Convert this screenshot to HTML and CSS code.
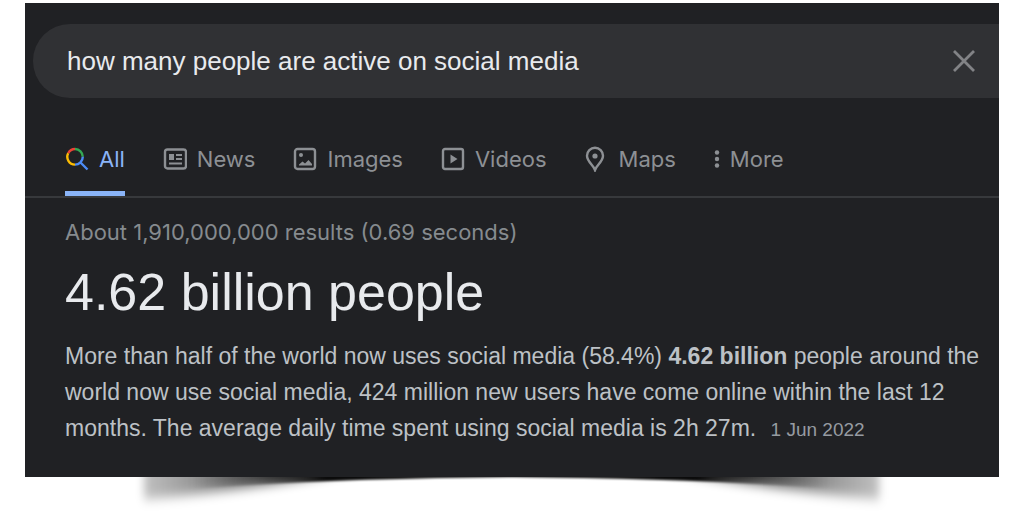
FILE: index.html
```
<!DOCTYPE html>
<html lang="en">
<head>
	<meta charset="UTF-8">
	<meta name="viewport" content="width=device-width, initial-scale=1">
	<title>how many people are active on social media</title>
	<link rel="stylesheet" href="styles.css">
</head>
<body>
	<div class="card">
		<form class="search">
			<input type="text" class="search-input" name="q" aria-label="Search" value="how many people are active on social media">
			<button type="reset" class="search-clear" aria-label="Clear">
				<svg width="24" height="24" viewBox="0 0 24 24"><path d="M2 2L22 22M22 2L2 22" fill="none" stroke="#828386" stroke-width="2.8"/></svg>
			</button>
		</form>

		<nav class="tabs">
			<a href="#" class="tab active">
				<svg width="24" height="24" viewBox="0 0 24 24" fill="none" stroke-width="2.4">
					<path d="M3.2 6.2A7.8 7.8 0 0 1 10 2" stroke="#ea4335"/>
					<path d="M10 2A7.8 7.8 0 0 1 17.8 9.8" stroke="#34a853"/>
					<path d="M17.8 9.8A7.8 7.8 0 0 1 10 17.6M15.5 15.5L22.5 22.5" stroke="#4c8bf5"/>
					<path d="M10 17.6A7.8 7.8 0 0 1 3.2 6.2" stroke="#fbbc04"/>
				</svg>
				<span>All</span>
			</a>
			<a href="#" class="tab">
				<svg width="24" height="24" viewBox="0 0 24 24" fill="none" stroke="currentColor" stroke-width="2.4">
					<rect x="2" y="2.5" width="21" height="19" rx="2.5"/>
					<path d="M13 8h6M13 12h6M6 16.5h13" stroke-width="2"/>
					<rect x="6" y="7" width="5" height="6" fill="currentColor" stroke="none"/>
				</svg>
				<span>News</span>
			</a>
			<a href="#" class="tab">
				<svg width="24" height="24" viewBox="0 0 24 24" fill="none" stroke="currentColor" stroke-width="2.4">
					<rect x="2" y="2" width="20" height="20" rx="2.5"/>
					<circle cx="8" cy="8" r="2" fill="currentColor" stroke="none"/>
					<path d="M6 18.5v-1l3.5-3 2.5 2 3.5-3.5 3.5 4v1.500z" fill="currentColor" stroke="none"/>
				</svg>
				<span>Images</span>
			</a>
			<a href="#" class="tab">
				<svg width="24" height="24" viewBox="0 0 24 24" fill="none" stroke="currentColor" stroke-width="2.4">
					<rect x="2" y="2" width="20" height="20" rx="2"/>
					<path d="M9.5 7.5v9l7-4.500z" fill="currentColor" stroke="none"/>
				</svg>
				<span>Videos</span>
			</a>
			<a href="#" class="tab">
				<svg width="24" height="26" viewBox="0 0 24 26" fill="none" stroke="currentColor" stroke-width="2.4">
					<path d="M10 24C8.5 19.5 2 15.5 2 9.8A8 8 0 0 1 18 9.8C18 15.5 11.5 19.5 10 24z"/>
					<circle cx="10" cy="10" r="2.6" fill="currentColor" stroke="none"/>
				</svg>
				<span>Maps</span>
			</a>
			<a href="#" class="tab">
				<svg width="6" height="20" viewBox="0 0 6 20" fill="currentColor">
					<circle cx="3" cy="3.5" r="2.2"/>
					<circle cx="3" cy="10" r="2.2"/>
					<circle cx="3" cy="16.5" r="2.2"/>
				</svg>
				<span>More</span>
			</a>
		</nav>

		<main class="result">
			<p class="stats">About 1,910,000,000 results (0.69 seconds)</p>
			<h1 class="answer">4.62 billion people</h1>
			<p class="snippet">More than half of the world now uses social media (58.4%) <b>4.62 billion</b> people around the world now use social media, 424 million new users have come online within the last 12 months. The average daily time spent using social media is 2h 27m. <span class="date">1 Jun 2022</span></p>
		</main>
	</div>

	<!-- curved shadow under the card -->
	<svg class="shadow" viewBox="0 0 780 36" preserveAspectRatio="none" aria-hidden="true">
		<defs>
			<linearGradient id="wide" gradientUnits="userSpaceOnUse" x1="0" y1="0" x2="780" y2="0">
				<stop offset="0.03" stop-opacity="0.25"/>
				<stop offset="0.13" stop-opacity="0.5"/>
				<stop offset="0.24" stop-opacity="0.8"/>
				<stop offset="0.76" stop-opacity="0.8"/>
				<stop offset="0.87" stop-opacity="0.5"/>
				<stop offset="0.97" stop-opacity="0.25"/>
			</linearGradient>
			<linearGradient id="thin" gradientUnits="userSpaceOnUse" x1="0" y1="0" x2="780" y2="0">
				<stop offset="0.09" stop-opacity="0"/>
				<stop offset="0.17" stop-opacity="0.3"/>
				<stop offset="0.26" stop-opacity="0.95"/>
				<stop offset="0.74" stop-opacity="0.95"/>
				<stop offset="0.83" stop-opacity="0.3"/>
				<stop offset="0.91" stop-opacity="0"/>
			</linearGradient>
			<filter id="soft" filterUnits="userSpaceOnUse" x="-20" y="-50" width="820" height="120"><feGaussianBlur stdDeviation="4 6"/></filter>
			<filter id="sharp" filterUnits="userSpaceOnUse" x="-20" y="-50" width="820" height="120"><feGaussianBlur stdDeviation="4 1"/></filter>
		</defs>
		<path d="M22 -30V23Q120 14 230 -8L390 -24L550 -8Q660 14 758 23V-30z" fill="url(#wide)" filter="url(#soft)"/>
		<path d="M60 -20V13Q190 2 390 0Q590 2 720 13V-20z" fill="url(#thin)" filter="url(#sharp)"/>
	</svg>
</body>
</html>
```
FILE: styles.css
```
* {
	box-sizing: border-box;
}
body {
	margin: 0;
	padding: 3px 25px 0;
	background-color: #fff;
	font-family: "Liberation Sans", Arial, sans-serif;
}
p, h1 {
	margin: 0;
}
.card {
	background-color: #202124;
	padding: 21px 0 29px;
}
.search {
	display: flex;
	align-items: center;
	height: 74px;
	margin-left: 8px;
	padding: 0 23px 0 34px;
	border-radius: 37px 0 0 37px;
	background-color: #303134;
}
.search-input {
	flex: 1;
	min-width: 0;
	padding: 0;
	border: 0;
	outline: 0;
	background: none;
	color: #e8eaed;
	font-family: inherit;
	font-size: 26px;
}
.search-clear {
	display: flex;
	padding: 0;
	border: 0;
	background: none;
	cursor: pointer;
}
.tabs {
	display: flex;
	gap: 38px;
	margin-top: 36px;
	padding-left: 40px;
	border-bottom: 2px solid #37393c;
}
.tab {
	display: flex;
	align-items: center;
	gap: 10px;
	height: 62px;
	padding-bottom: 12px;
	color: #8d9094;
	font-family: Inter, sans-serif;
	font-size: 22px;
	text-decoration: none;
}
.tab svg {
	flex: none;
}
.tab.active {
	border-bottom: 5px solid #8ab4f8;
	padding-bottom: 7px;
	color: #8ab4f8;
}
.result {
	padding: 20px 12px 0 40px;
}
.stats {
	color: #868b8f;
	font-family: Inter, sans-serif;
	font-size: 22px;
	line-height: 28px;
}
.answer {
	margin-top: 16px;
	color: #e8eaed;
	font-size: 52px;
	font-weight: normal;
	line-height: 60px;
}
.snippet {
	margin-top: 16px;
	color: #bdc1c6;
	font-size: 23px;
	line-height: 36px;
}
.date {
	margin-left: 8px;
	color: #969ba1;
	font-size: 19px;
}
.shadow {
	display: block;
	width: 80%;
	height: 35px;
	margin: 0 auto;
}
```
